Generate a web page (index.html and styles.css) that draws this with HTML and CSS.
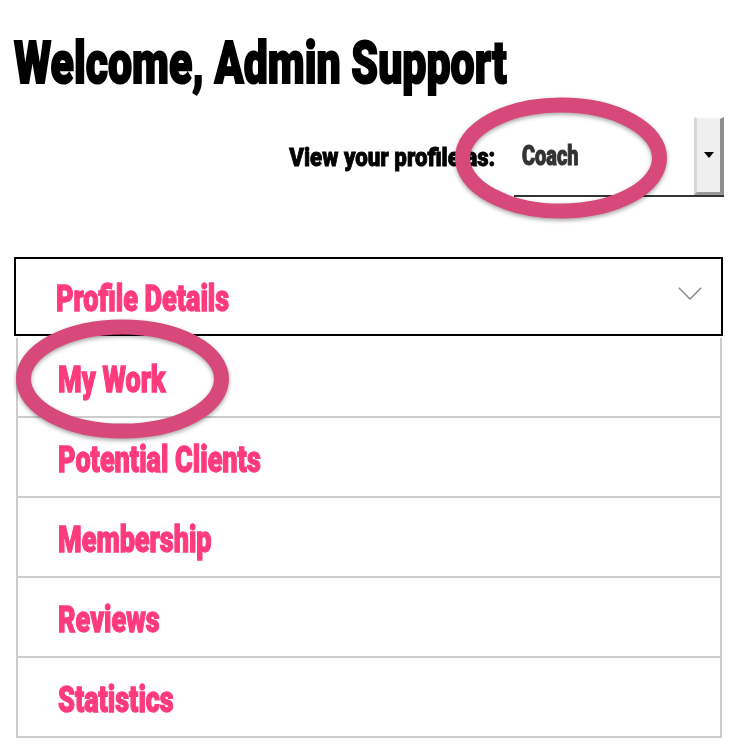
FILE: index.html
```html
<!DOCTYPE html>
<html lang="en">
<head>
<meta charset="utf-8">
<title>Welcome, Admin Support</title>
<link rel="stylesheet" href="styles.css">
</head>
<body>
<div class="page">
  <h1 class="title"><span class="title-text">Welcome, Admin Support</span></h1>

  <div class="view-row">
    <span class="view-label">View your profile as:</span>
    <div class="select">
      <span class="select-value"><span class="select-text">Coach</span></span>
      <span class="select-btn">
        <svg width="10" height="6" viewBox="0 0 10 6"><path d="M0 0 H10 L5 6 Z" fill="#000"/></svg>
      </span>
    </div>
  </div>

  <nav class="menu">
    <div class="menu-head">
      <span class="menu-text">Profile Details</span>
      <svg class="chevron" width="24" height="13" viewBox="0 0 24 13"><path d="M0.8 0.8 L12 12 L23.2 0.8" fill="none" stroke="#8a8a8a" stroke-width="1.5"/></svg>
    </div>
    <ul class="menu-list">
      <li class="menu-item"><span class="menu-text">My Work</span></li>
      <li class="menu-item"><span class="menu-text">Potential Clients</span></li>
      <li class="menu-item"><span class="menu-text">Membership</span></li>
      <li class="menu-item"><span class="menu-text">Reviews</span></li>
      <li class="menu-item"><span class="menu-text">Statistics</span></li>
    </ul>
  </nav>

  <svg class="annotations" width="738" height="744" viewBox="0 0 738 744">
    <ellipse cx="561" cy="158" rx="98.5" ry="53" fill="none" stroke="#d7497a" stroke-width="15"/>
    <ellipse cx="122.5" cy="379" rx="99" ry="52" fill="none" stroke="#d7497a" stroke-width="15"/>
  </svg>
</div>
</body>
</html>
```

FILE: styles.css
```css
html, body {
  margin: 0;
  padding: 0;
  background: #ffffff;
}

body {
  font-family: Roboto, "Liberation Sans", sans-serif;
  font-weight: 900;
  color: #000;
}

.page {
  position: relative;
  padding: 33px 14px 0 14px;
  height: 711px;
  overflow: hidden;
}

.title {
  margin: 0;
  font-size: 60px;
  line-height: 60px;
  font-weight: 900;
  white-space: nowrap;
}

.title-text {
  display: inline-block;
  transform: scaleX(0.714);
  transform-origin: 0 50%;
  -webkit-text-stroke: 2px #000;
}

.view-row {
  display: flex;
  justify-content: flex-end;
  align-items: center;
  gap: 19px;
  margin-top: 24px;
  height: 80px;
}

.view-label {
  display: inline-block;
  font-size: 26.5px;
  line-height: 30px;
  white-space: nowrap;
  transform: scaleX(0.84);
  transform-origin: 100% 50%;
  -webkit-text-stroke: 0.9px #000;
}

.select {
  width: 210px;
  height: 80px;
  box-sizing: border-box;
  border-bottom: 2px solid #333;
  display: flex;
  align-items: stretch;
}

.select-value {
  flex: 1;
  display: flex;
  align-items: center;
  padding-left: 8px;
  font-size: 27px;
  line-height: 30px;
  color: #333;
}

.select-text {
  display: inline-block;
  transform: scaleX(0.74);
  transform-origin: 0 50%;
  -webkit-text-stroke: 1px #333;
}

.select-btn {
  width: 30px;
  box-sizing: border-box;
  background: #efefef;
  border-style: solid;
  border-width: 2px 4px 3px 3px;
  border-color: #f7f7f7 #8e8e8e #9a9a9a #d6d6d6;
  display: flex;
  align-items: center;
  justify-content: center;
  padding-bottom: 2px;
}

.menu {
  margin-top: 60px;
  margin-right: 1px;
}

.menu-head {
  height: 79px;
  box-sizing: border-box;
  border: 2px solid #000;
  display: flex;
  align-items: center;
  justify-content: space-between;
  padding: 5px 19px 0 40px;
}

.chevron {
  display: block;
  margin-top: -11px;
}

.menu-list {
  list-style: none;
  margin: 2px 1px 0 2px;
  padding: 0;
}

.menu-item {
  height: 80px;
  box-sizing: border-box;
  border: 2px solid #ccc;
  border-top: 0;
  display: flex;
  align-items: center;
  padding: 5px 0 0 40px;
}

.menu-text {
  display: inline-block;
  font-size: 37px;
  line-height: 40px;
  color: #ff3a7e;
  white-space: nowrap;
  transform: scaleX(0.73);
  transform-origin: 0 50%;
  -webkit-text-stroke: 1.3px #ff3a7e;
}

.annotations {
  position: absolute;
  top: 0;
  left: 0;
  pointer-events: none;
  filter: drop-shadow(0 2px 2px rgba(0, 0, 0, 0.35));
}
```
